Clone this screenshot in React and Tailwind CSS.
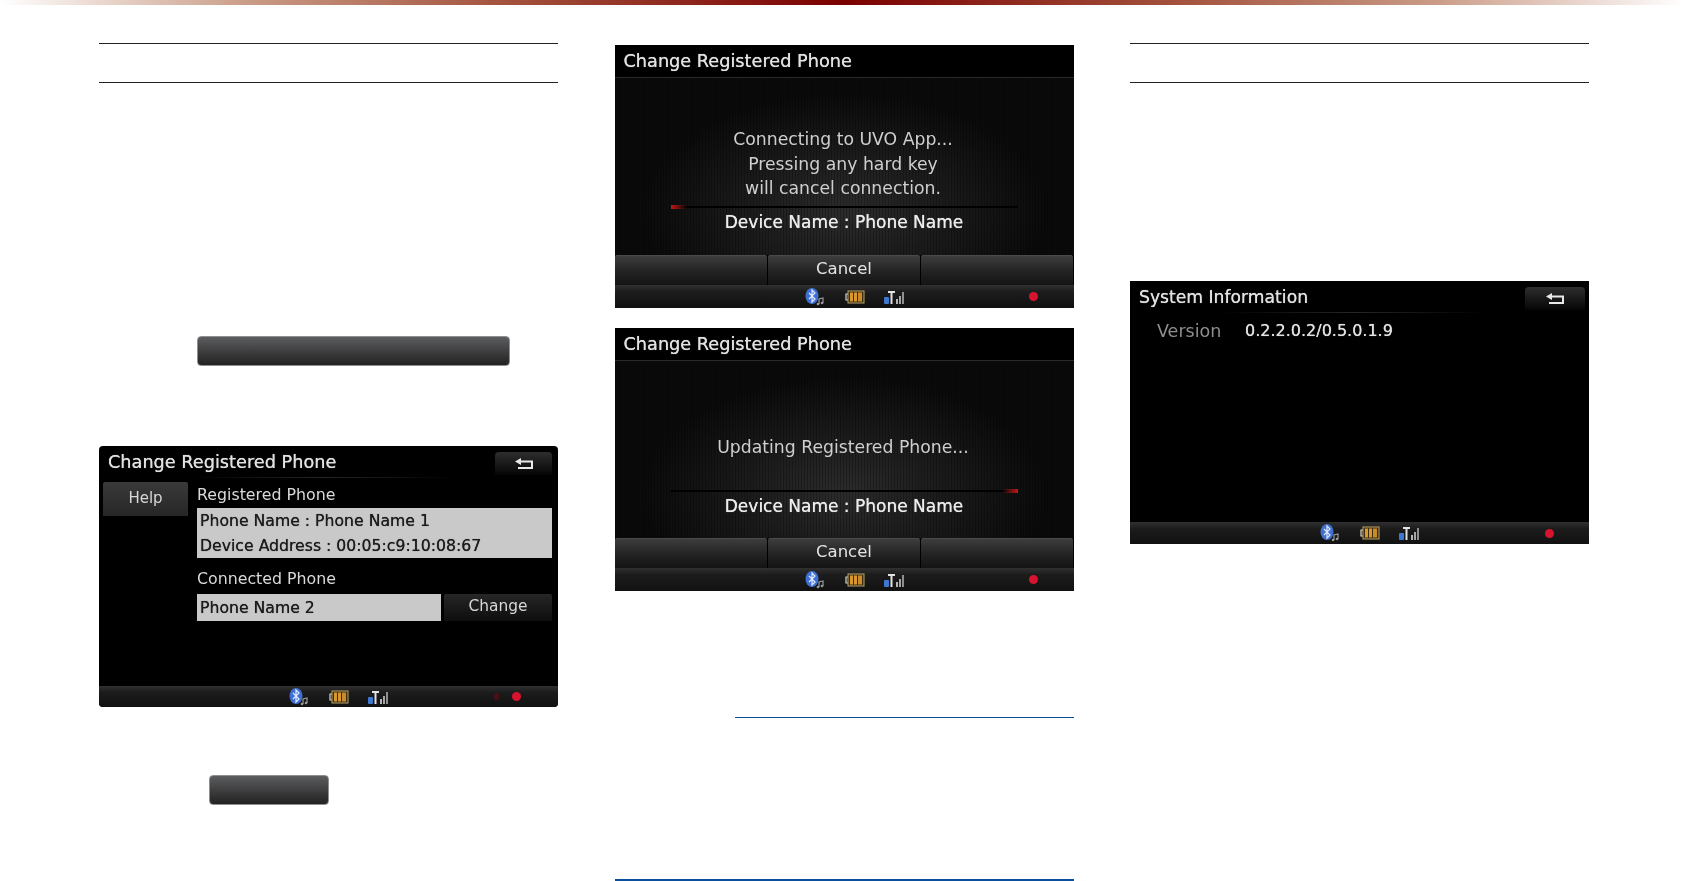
import React from 'react';

const screenFont = "font-['DejaVu_Sans','Liberation_Sans',sans-serif]";
const heavier = '[text-shadow:0_0_0.7px_currentColor]';

const BtIcon = () => (
  <svg width="22" height="20" viewBox="0 0 22 20" className="shrink-0">
    <ellipse cx="8" cy="9" rx="6.5" ry="8" fill="#3f6fd0" />
    <path d="M5 6l6 6-3 3V3l3 3-6 6" fill="none" stroke="#dfe8ff" strokeWidth="1.2" />
    <path d="M15 17v-5l4-1v5" fill="none" stroke="#9a9a9a" strokeWidth="1.2" />
    <circle cx="14" cy="17" r="1.3" fill="#9a9a9a" />
    <circle cx="18" cy="16" r="1.3" fill="#9a9a9a" />
  </svg>
);

const BatteryIcon = () => (
  <svg width="20" height="14" viewBox="0 0 20 14" className="shrink-0">
    <path d="M3 4H1v6h2" fill="none" stroke="#d8d8c8" strokeWidth="1.2" />
    <rect x="3" y="1" width="16" height="12" fill="#3a2c10" stroke="#b9a46a" strokeWidth="1" />
    <rect x="5" y="2.5" width="3" height="9" fill="#d9972f" />
    <rect x="9" y="2.5" width="3" height="9" fill="#d9972f" />
    <rect x="13" y="2.5" width="4" height="9" fill="#c98a2a" />
  </svg>
);

const SignalIcon = () => (
  <svg width="22" height="16" viewBox="0 0 22 16" className="shrink-0">
    <rect x="0" y="8" width="5" height="7" rx="1" fill="#3f78d0" />
    <path d="M4 2h7v2H8.5v11h-2V4H4z" fill="#e2e2e2" />
    <rect x="12" y="10" width="2" height="5" fill="#b5b5b5" />
    <rect x="15" y="7" width="2" height="8" fill="#a5a5a5" />
    <rect x="18" y="3" width="2" height="12" fill="#8f8f8f" />
  </svg>
);

const BackIcon = () => (
  <svg width="20" height="13" viewBox="0 0 20 13">
    <path d="M1 4.5L7 1v2.5h12V12H4v-2h13V5.5H7V8z" fill="#e8e8e8" />
  </svg>
);

const StatusBar = ({ className, dotClass, dim }) => (
  <div className={`flex items-center bg-[linear-gradient(#303030,#1c1c1c_30%,#111)] ${className}`}>
    <div className="flex items-center gap-[19px] ml-[189px] blur-[0.5px]">
      <BtIcon />
      <BatteryIcon />
      <SignalIcon />
    </div>
    {dim && <div className="w-[5px] h-[7px] rounded-full bg-[#4a1018] ml-[104px]" />}
    <div className={`w-[9px] h-[9px] rounded-full bg-[#d8132f] blur-[0.5px] ${dim ? 'ml-[13px]' : dotClass}`} />
  </div>
);

const BackButton = ({ className }) => (
  <div className={`flex items-center justify-center rounded-t-sm bg-[linear-gradient(#2e2e2e,#050505)] ${className}`}>
    <BackIcon />
  </div>
);

const ActionButton = ({ label }) => (
  <div className="flex-1 flex items-center justify-center h-full pb-[2px] border-t border-[#4a4a4a] rounded-t-[2px] bg-[linear-gradient(#3d3d3d,#222_55%,#141414)] text-[#e4e4e4] text-[16.5px]">
    {label}
  </div>
);

const ProgressMark = ({ right }) => (
  <div
    className={`w-[16px] h-[4px] -mt-[1px] blur-[0.5px] ${
      right
        ? 'bg-[linear-gradient(to_right,transparent,#c01818)]'
        : 'bg-[linear-gradient(to_right,#c01818,transparent)]'
    }`}
  />
);

const ProgressScreen = ({ lines, topSpace, progressRight }) => (
  <div className={`w-full h-[263px] flex flex-col bg-black blur-[0.4px] ${screenFont}`}>
    <div className={`h-[33px] shrink-0 flex items-center pl-[9px] pt-[1px] border-b border-[#2a2a2a] text-[#e2e2e2] text-[17.7px] ${heavier}`}>
      Change Registered Phone
    </div>
    <div className="flex-1 flex flex-col items-center bg-[repeating-linear-gradient(90deg,rgba(0,0,0,0.25)_0_1px,transparent_1px_3px),radial-gradient(ellipse_at_50%_75%,#2c2c2c,#0a0a0a_62%)]">
      <div className={`flex flex-col items-center text-[#cfcfcf] text-[17.25px] leading-[24.5px] -ml-[2px] ${topSpace}`}>
        {lines.map((line) => (
          <div key={line}>{line}</div>
        ))}
      </div>
      <div className={`w-[347px] h-[2px] bg-black flex ${progressRight ? 'justify-end' : ''} ${lines.length > 1 ? 'mt-[5px]' : 'mt-[30px]'}`}>
        <ProgressMark right={progressRight} />
      </div>
      <div className={`mt-[4px] text-[#ececec] text-[17px] leading-[20px] ${heavier}`}>Device Name : Phone Name</div>
    </div>
    <div className="h-[30px] shrink-0 flex gap-[1px]">
      <ActionButton label="" />
      <ActionButton label="Cancel" />
      <ActionButton label="" />
    </div>
    <StatusBar className="h-[23px] shrink-0" dotClass="ml-[123px]" />
  </div>
);

const RegisteredScreen = () => (
  <div className={`w-full h-[261px] flex flex-col bg-black rounded-[4px] overflow-hidden blur-[0.4px] ${screenFont}`}>
    <div className="h-[240px] flex flex-col">
      <div className="h-[36px] shrink-0 flex flex-col">
        <div className="flex pl-[9px] pr-[6px] pt-[6px] h-[31px]">
          <div className={`flex-1 text-[#e2e2e2] text-[17.7px] leading-[20px] ${heavier}`}>Change Registered Phone</div>
          <BackButton className="w-[57px] h-[23px]" />
        </div>
        <div className="h-px ml-[90px] mr-[100px] bg-[linear-gradient(to_right,transparent,#262626,transparent)]" />
      </div>
      <div className="flex">
        <div className="w-[85px] h-[34px] ml-[4px] pb-[2px] flex items-center justify-center rounded-t-[2px] bg-[linear-gradient(#3a3a3a,#262626)] text-[#d8d8d8] text-[15px]">
          Help
        </div>
        <div className="w-[355px] ml-[9px]">
          <div className="text-[#dadada] text-[15.8px] leading-[20px] mt-[3px]">Registered Phone</div>
          <div className={`h-[50px] mt-[3px] pl-[3px] bg-[#c9c9c9] text-[#1c1c1c] text-[15.7px] leading-[25px] ${heavier}`}>
            <div>Phone Name : Phone Name 1</div>
            <div>Device Address : 00:05:c9:10:08:67</div>
          </div>
          <div className="text-[#dadada] text-[15.8px] leading-[20px] mt-[11px]">Connected Phone</div>
          <div className="flex mt-[5px] h-[27px]">
            <div className={`w-[244px] pl-[3px] flex items-center bg-[#c9c9c9] text-[#1c1c1c] text-[15.7px] ${heavier}`}>
              Phone Name 2
            </div>
            <div className="flex-1 ml-[3px] pb-[2px] flex items-center justify-center rounded-t-[2px] bg-[linear-gradient(#262626,#0e0e0e)] text-[#d8d8d8] text-[15.4px]">
              Change
            </div>
          </div>
        </div>
      </div>
    </div>
    <StatusBar className="h-[21px] shrink-0" dim />
  </div>
);

const SystemInfoScreen = () => (
  <div className={`w-full h-[263px] flex flex-col bg-black blur-[0.4px] ${screenFont}`}>
    <div className="flex-1">
      <div className="flex pl-[9px] pr-[4px] pt-[6px] h-[31px]">
        <div className={`flex-1 text-[#e2e2e2] text-[17.2px] leading-[20px] ${heavier}`}>System Information</div>
        <BackButton className="w-[60px] h-[23px]" />
      </div>
      <div className="h-px ml-[90px] mr-[100px] bg-[linear-gradient(to_right,transparent,#262626,transparent)]" />
      <div className="flex mt-[6px] ml-[27px] leading-[24px]">
        <div className="w-[88px] text-[#8e8e8e] text-[17.5px]">Version</div>
        <div className={`text-[#e2e2e2] text-[16px] ${heavier}`}>0.2.2.0.2/0.5.0.1.9</div>
      </div>
    </div>
    <StatusBar className="h-[22px] shrink-0" dotClass="ml-[124px]" />
  </div>
);

const SectionRule = () => <div className="h-[40px] border-y border-[#222]" />;

const Pill = ({ className }) => (
  <div className={`h-[30px] rounded-[4px] border border-[#8f8f8f] bg-[linear-gradient(#5c5d5f,#3c3c3d_55%,#222)] ${className}`} />
);

export default function App() {
  return (
    <div className="h-[881px] overflow-hidden bg-white">
      <div className="h-[5px] bg-[linear-gradient(to_right,#fff,#c99a85_15%,#a3523d_30%,#7a0000_50%,#a3523d_70%,#c99a85_85%,#fff)]" />
      <div className="flex pl-[99px] gap-[56.5px]">
        <div className="w-[459px] pt-[38px]">
          <SectionRule />
          <Pill className="w-[313px] ml-[98px] mt-[253px]" />
          <div className="mt-[80px]">
            <RegisteredScreen />
          </div>
          <Pill className="w-[120px] ml-[110px] mt-[68px]" />
        </div>

        <div className="w-[459px] pt-[40px]">
          <ProgressScreen
            lines={['Connecting to UVO App...', 'Pressing any hard key', 'will cancel connection.']}
            topSpace="mt-[49px]"
          />
          <div className="mt-[20px]">
            <ProgressScreen lines={['Updating Registered Phone...']} topSpace="mt-[74px]" progressRight />
          </div>
          <div className="h-px bg-[#0a4f9e] ml-[120px] mt-[126px]" />
          <div className="h-[2px] bg-[#0a4f9e] mt-[161px]" />
        </div>

        <div className="w-[459px] pt-[38px]">
          <SectionRule />
          <div className="mt-[198px]">
            <SystemInfoScreen />
          </div>
        </div>
      </div>
    </div>
  );
}
